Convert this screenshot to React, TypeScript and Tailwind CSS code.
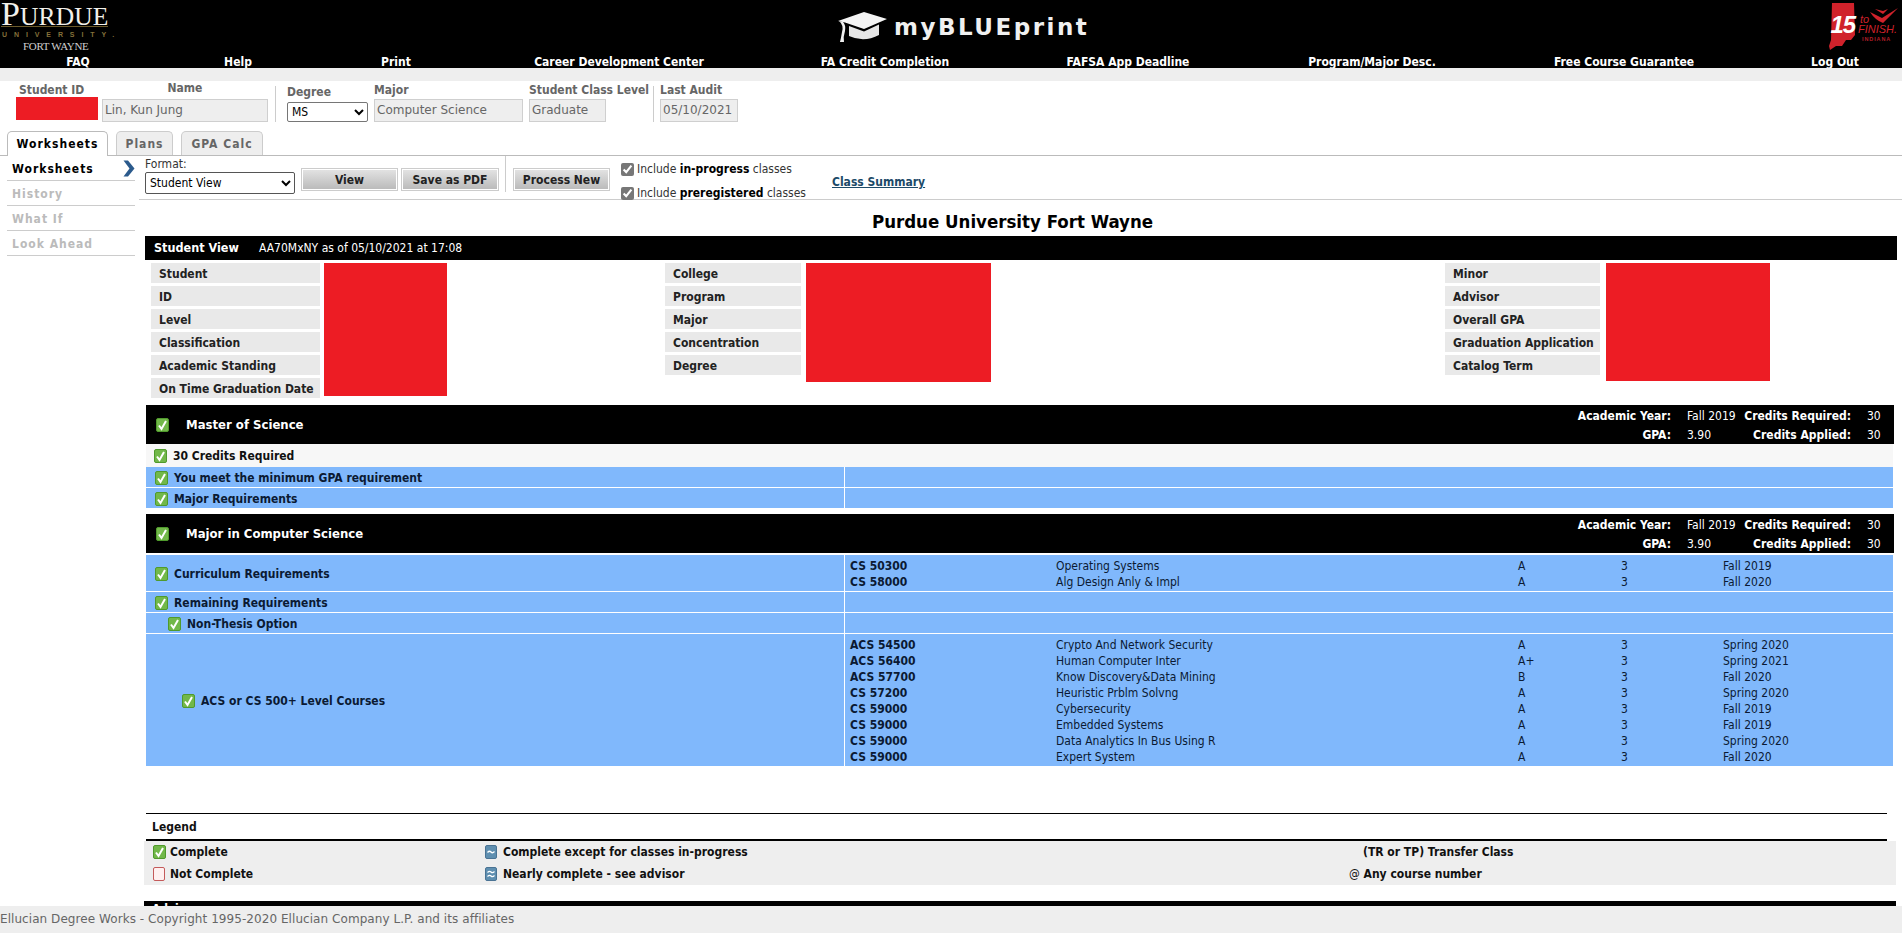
import React from "react";

const Check = ({ className = "" }: { className?: string }) => (
  <svg width="13" height="14" viewBox="0 0 13 14" className={"shrink-0 " + className}>
    <rect x="0.5" y="0.5" width="12" height="13" rx="1.5" fill="#72b84a" stroke="#4f9a2c" />
    <path d="M3 7.5 L5.5 11 L10 3" fill="none" stroke="#fff" strokeWidth="2" />
  </svg>
);

const Tilde = ({ double }: { double?: boolean }) => (
  <svg width="12" height="14" viewBox="0 0 12 14" className="shrink-0">
    <rect x="0.5" y="0.5" width="11" height="13" rx="1.5" fill="#5f8fb0" stroke="#4a7394" />
    {double ? (
      <path d="M2.5 5.5 Q4.5 3.5 6 5 T9.5 4.5 M2.5 9.5 Q4.5 7.5 6 9 T9.5 8.5" fill="none" stroke="#fff" strokeWidth="1.2" />
    ) : (
      <path d="M2.5 7.5 Q4.5 5.5 6 7 T9.5 6.5" fill="none" stroke="#fff" strokeWidth="1.4" />
    )}
  </svg>
);

const Empty = () => (
  <svg width="12" height="14" viewBox="0 0 12 14" className="shrink-0">
    <rect x="0.5" y="0.5" width="11" height="13" rx="1.5" fill="#fff0f0" stroke="#c45a5a" />
  </svg>
);

const nav = [
  "FAQ",
  "Help",
  "Print",
  "Career Development Center",
  "FA Credit Completion",
  "FAFSA App Deadline",
  "Program/Major Desc.",
  "Free Course Guarantee",
  "Log Out",
];

const PurdueLogo = () => (
  <div className="w-[116px] h-[53px] pl-[1px] font-['Liberation_Serif',serif] text-white leading-none">
    <div className="h-[26px] pt-[2px] text-[25.5px] tracking-[0.1px] text-[#f2f0ea] whitespace-nowrap">
      <span className="text-[34px] leading-[24px]">P</span>URDUE
    </div>
    <div className="h-px w-[107px] bg-[#6b5a2a]" />
    <div className="h-[13px] pt-[4px] pl-[1px] text-[7px] font-bold tracking-[6.9px] text-[#84703a] whitespace-nowrap font-['Liberation_Sans',sans-serif]">
      UNIVERSITY.
    </div>
    <div className="pt-[1px] pl-[22px] text-[11px] tracking-[-0.3px] text-[#cfcfcf] whitespace-nowrap">FORT WAYNE</div>
  </div>
);

const Cap = () => (
  <svg width="51" height="32" viewBox="0 0 51 32">
    <path d="M1 10 L27 1 L50 8 L27 18 L8 11.5 Z" fill="#f4f4f4" />
    <path d="M12 15 L27 20.5 L42 13.5 L42 24 Q27 32 12 25 Z" fill="#e6e6e6" />
    <path d="M2 10 Q7 14 5 21 Q4 27 3 31 L7 31 Q6 26 8 20 Q9 14 6 11" fill="#f0f0f0" />
  </svg>
);

const FinishLogo = () => (
  <svg width="82" height="53" viewBox="0 0 82 53">
    <path d="M12 3 L34 3 L35 35 L31 40 L26 40 L22 46 L16 46 L10 50 L9 46 L11 40 Z" fill="#d0222b" />
    <text x="10.5" y="33" fill="#fff" fontFamily="Liberation Sans, sans-serif" fontWeight="700" fontStyle="italic" fontSize="24" letterSpacing="-1">15</text>
    <text x="40" y="23" fill="#d0222b" fontFamily="Liberation Sans, sans-serif" fontStyle="italic" fontSize="11">to</text>
    <path d="M50 12 L62 18 L78 8 L63 23 Q55 20 50 12 Z" fill="#d0222b" />
    <path d="M55 9 L63 11 L68 9 L63 14 Z" fill="#d0222b" />
    <text x="38" y="33" fill="#d0222b" fontFamily="Liberation Sans, sans-serif" fontStyle="italic" fontSize="11">FINISH.</text>
    <text x="42" y="41" fill="#b01e27" fontFamily="Liberation Sans, sans-serif" fontWeight="700" fontSize="5.5" letterSpacing="0.9">INDIANA</text>
  </svg>
);

const Header = () => (
  <header className="bg-black h-[68px] flex flex-col">
    <div className="h-[53px] flex items-start">
      <div className="w-[140px]"><PurdueLogo /></div>
      <div className="flex-1 flex items-center gap-[6px] pt-[11px] pl-[697px]">
        <Cap />
        <span className="font-['DejaVu_Sans',sans-serif] [font-stretch:normal] font-bold text-[23px] leading-[32px] tracking-[2.5px] text-[#f0f0f0]">myBLUEprint</span>
      </div>
      <div className="w-[82px]"><FinishLogo /></div>
    </div>
    <nav className="h-[15px] grid grid-cols-[156px_164px_152px_294px_238px_248px_240px_264px_146px] text-white font-bold text-[12px] leading-[18px] text-center overflow-hidden">
      {nav.map((n) => (
        <a key={n} className={n === "Log Out" ? "pl-[12px]" : ""}>{n}</a>
      ))}
    </nav>
  </header>
);

const Ro = ({ value, w }: { value: string; w: string }) => (
  <input
    readOnly
    value={value}
    className={"h-[23px] bg-[#eeeeee] border border-[#cfcfcf] px-[2px] font-['DejaVu_Sans',sans-serif] [font-stretch:normal] text-[12px] text-[#666] outline-none " + w}
  />
);

const Lab = ({ children, center }: { children: React.ReactNode; center?: boolean }) => (
  <div className={"h-[13px] leading-[13px] font-bold text-[12px] text-[#666] whitespace-nowrap " + (center ? "text-center" : "")}>{children}</div>
);

const StudentBar = () => (
  <div className="h-[50px] flex items-start pt-[3px] pl-[16px]">
    <div className="w-[82px]">
      <div className="pl-[3px]"><Lab>Student ID</Lab></div>
      <div className="h-[23px] bg-[#ed1c24]" />
    </div>
    <div className="w-[166px] ml-[4px] -mt-[2px]">
      <Lab center>Name</Lab>
      <div className="mt-[2px]"><Ro value="Lin, Kun Jung" w="w-[166px]" /></div>
    </div>
    <div className="w-px h-[36px] bg-[#ccc] ml-[7px] mt-[2px]" />
    <div className="w-[81px] ml-[11px] pt-[2px]">
      <Lab>Degree</Lab>
      <select defaultValue="MS" className="mt-[2px] h-[20px] w-[81px] bg-white border border-[#767676] rounded-[2px] text-[12px] text-black">
        <option>MS</option>
      </select>
    </div>
    <div className="w-[149px] ml-[6px]">
      <Lab>Major</Lab>
      <Ro value="Computer Science" w="w-[149px]" />
    </div>
    <div className="w-[124px] ml-[6px]">
      <Lab>Student Class Level</Lab>
      <Ro value="Graduate" w="w-[77px]" />
    </div>
    <div className="w-px h-[36px] bg-[#ccc] mt-[2px]" />
    <div className="w-[78px] ml-[6px]">
      <Lab>Last Audit</Lab>
      <Ro value="05/10/2021" w="w-[78px]" />
    </div>
  </div>
);

const Tabs = () => (
  <div className="h-[25px] border-b border-[#bbb] flex items-end pl-[7px] gap-[8px] font-bold text-[12px] tracking-[1px]">
    <div className="h-[25px] -mb-px w-[101px] border border-b-0 border-[#bbb] rounded-t-[5px] bg-white text-black flex items-center justify-center">Worksheets</div>
    <div className="h-[24px] w-[57px] border border-b-0 border-[#ccc] rounded-t-[5px] bg-[#eee] text-[#666] flex items-center justify-center">Plans</div>
    <div className="h-[24px] w-[82px] border border-b-0 border-[#ccc] rounded-t-[5px] bg-[#eee] text-[#666] flex items-center justify-center">GPA Calc</div>
  </div>
);

const SideNav = () => (
  <aside className="w-[139px] pl-[7px] pr-[4px] font-bold text-[12px] tracking-[1px]">
    <div className="relative h-[25px] border-b border-[#ccc] flex items-center pl-[5px] pt-[2px] text-black">
      Worksheets
      <svg width="12" height="17" viewBox="0 0 12 17" className="absolute right-0 top-[4px]">
        <path d="M0.5 0.5 L5 0.5 L11.5 8.5 L5 16.5 L0.5 16.5 L6.5 8.5 Z" fill="#2b5a8c" />
      </svg>
    </div>
    {["History", "What If", "Look Ahead"].map((t) => (
      <div key={t} className="h-[25px] border-b border-[#ccc] flex items-center pl-[5px] pt-[2px] text-[#bbb]">{t}</div>
    ))}
  </aside>
);

const btn = "h-[23px] border border-[#ccc] shadow-[inset_0_0_0_1px_#fff] bg-linear-to-b from-[#e4e4e4] to-[#b9b9b9] font-bold text-[12px] text-[#222] flex items-center justify-center";

const Toolbar = () => (
  <div className="h-[44px] border-b border-[#ccc] pl-[6px] flex items-start">
    <div className="w-[150px] text-[12px] text-[#333]">
      <div className="h-[15px] leading-[15px] mt-[1px]">Format:</div>
      <select defaultValue="Student View" className="h-[22px] w-[150px] bg-white border border-[#555] rounded-[2px] text-[12px] text-black">
        <option>Student View</option>
      </select>
    </div>
    <button className={btn + " w-[97px] ml-[6px] mt-[12px]"}>View</button>
    <button className={btn + " w-[98px] ml-[3px] mt-[12px]"}>Save as PDF</button>
    <div className="w-px h-[36px] bg-[#ccc] ml-[6px]" />
    <button className={btn + " w-[97px] ml-[7px] mt-[12px]"}>Process New</button>
    <div className="ml-[11px] w-[211px] pt-[2px] text-[12px] text-[#333]">
      <label className="h-[24px] flex items-center gap-[3px] -mt-[1px]">
        <input type="checkbox" checked readOnly className="w-[13px] h-[13px] m-0 accent-[#777]" />
        <span>Include <b className="text-black">in-progress</b> classes</span>
      </label>
      <label className="h-[24px] flex items-center gap-[3px]">
        <input type="checkbox" checked readOnly className="w-[13px] h-[13px] m-0 accent-[#777]" />
        <span>Include <b className="text-black">preregistered</b> classes</span>
      </label>
    </div>
    <a className="mt-[17px] font-bold text-[12px] text-[#1c4a68] underline">Class Summary</a>
  </div>
);

const InfoCol = ({ labels, w, ml, redW, redH, gap }: { labels: string[]; w: string; ml: string; redW: string; redH: string; gap: string }) => (
  <div className={"flex items-start " + ml}>
    <div className={"flex flex-col gap-[3px] " + w}>
      {labels.map((l) => (
        <div key={l} className="h-[20px] leading-[22px] bg-[#e9e9e9] pl-[8px] font-bold text-[12px] text-[#222] whitespace-nowrap">{l}</div>
      ))}
    </div>
    <div className={"bg-[#ed1c24] " + redW + " " + redH + " " + gap} />
  </div>
);

const SectionHead = ({ title, gpa }: { title: string; gpa: string }) => (
  <div className="h-[39px] w-[1748px] ml-[1px] bg-black text-white flex items-center text-[12px]">
    <Check className="ml-[10px]" />
    <div className="ml-[17px] font-bold text-[13px]">{title}</div>
    <div className="ml-auto grid grid-cols-[100px_70px_110px_43px] grid-rows-[19px_19px] items-center pt-[2px] leading-[19px] whitespace-nowrap">
      <div className="font-bold text-right">Academic Year:</div>
      <div className="pl-[16px]">Fall 2019</div>
      <div className="font-bold text-right">Credits Required:</div>
      <div className="pl-[16px]">30</div>
      <div className="font-bold text-right">GPA:</div>
      <div className="pl-[16px]">{gpa}</div>
      <div className="font-bold text-right">Credits Applied:</div>
      <div className="pl-[16px]">30</div>
    </div>
  </div>
);

type Course = [string, string, string, string, string];

const Req = ({ label, indent, h, courses, pt }: { label: string; indent: string; h: string; courses?: Course[]; pt?: string }) => (
  <div className={"w-[1747px] ml-[1px] mb-px bg-[#80b8fc] grid grid-cols-[699px_1fr] " + h}>
    <div className={"flex items-center gap-[6px] pt-px font-bold text-[12px] text-[#0b1a33] border-r border-white " + indent}>
      <Check />
      <span>{label}</span>
    </div>
    <div className={"text-[12px] text-[#0b1a33] " + (pt ?? "")}>
      {courses?.map((c, i) => (
        <div key={i} className="h-[16px] leading-[16px] grid grid-cols-[206px_462px_103px_102px_1fr] pl-[5px]">
          <div className="font-bold">{c[0]}</div>
          <div>{c[1]}</div>
          <div>{c[2]}</div>
          <div>{c[3]}</div>
          <div>{c[4]}</div>
        </div>
      ))}
    </div>
  </div>
);

const Legend = () => (
  <div className="mt-[47px] text-[12px] font-bold text-[#111]">
    <div className="h-[28px] w-[1741px] ml-[1px] border-t border-b-2 border-black pl-[6px] pt-[1px] flex items-center">Legend</div>
    <div className="h-[44px] w-[1752px] -ml-px bg-[#eeeeee] grid grid-cols-[332px_878px_1fr] grid-rows-[22px_22px] items-center pl-[9px]">
      <div className="flex items-center gap-[4px]"><Check />Complete</div>
      <div className="flex items-center gap-[6px]"><Tilde />Complete except for classes in-progress</div>
      <div>(TR or TP) Transfer Class</div>
      <div className="flex items-center gap-[5px]"><Empty />Not Complete</div>
      <div className="flex items-center gap-[6px]"><Tilde double />Nearly complete - see advisor</div>
      <div className="-ml-[14px]"><span className="font-normal">@</span> Any course number</div>
    </div>
    <div className="mt-[16px] h-[24px] w-[1752px] -ml-px bg-black text-white pl-[8px] leading-[16px]">Advice</div>
  </div>
);

export default function App() {
  return (
    <div className="relative h-screen overflow-hidden bg-white font-['DejaVu_Sans_Condensed','DejaVu_Sans',sans-serif] [font-stretch:condensed]">
      <Header />
      <div className="h-[13px] bg-[#eeeeee]" />
      <StudentBar />
      <Tabs />
      <div className="flex items-start">
        <SideNav />
        <main className="flex-1 min-w-0">
          <Toolbar />
          <h1 className="h-[36px] pr-[16px] text-center font-bold text-[18.5px] leading-[43px] text-black">Purdue University Fort Wayne</h1>
          <div className="pl-[6px]">
            <div className="h-[24px] w-[1752px] bg-black text-white flex items-center text-[12px] pl-[9px]">
              <b className="font-bold text-[12.5px] w-[105px]">Student View</b>
              <span>AA70MxNY as of 05/10/2021 at 17:08</span>
            </div>
            <div className="h-[145px] pt-[3px] flex items-start">
              <InfoCol
                labels={["Student", "ID", "Level", "Classification", "Academic Standing", "On Time Graduation Date"]}
                w="w-[169px]" ml="ml-[6px]" redW="w-[123px]" redH="h-[133px]" gap="ml-[4px]"
              />
              <InfoCol
                labels={["College", "Program", "Major", "Concentration", "Degree"]}
                w="w-[136px]" ml="ml-[218px]" redW="w-[185px]" redH="h-[119px]" gap="ml-[5px]"
              />
              <InfoCol
                labels={["Minor", "Advisor", "Overall GPA", "Graduation Application", "Catalog Term"]}
                w="w-[155px]" ml="ml-[454px]" redW="w-[164px]" redH="h-[118px]" gap="ml-[6px]"
              />
            </div>
            <SectionHead title="Master of Science" gpa="3.90" />
            <div className="h-[23px] w-[1747px] ml-[1px] bg-[#f7f7f7] flex items-center gap-[6px] pl-[8px] font-bold text-[12px] text-[#111]">
              <Check />
              <span>30 Credits Required</span>
            </div>
            <Req label="You meet the minimum GPA requirement" indent="pl-[9px]" h="h-[20px]" />
            <Req label="Major Requirements" indent="pl-[9px]" h="h-[20px]" />
            <div className="h-[5px]" />
            <SectionHead title="Major in Computer Science" gpa="3.90" />
            <div className="h-[2px]" />
            <Req
              label="Curriculum Requirements" indent="pl-[9px]" h="h-[36px]" pt="pt-[3px]"
              courses={[
                ["CS 50300", "Operating Systems", "A", "3", "Fall 2019"],
                ["CS 58000", "Alg Design Anly & Impl", "A", "3", "Fall 2020"],
              ]}
            />
            <Req label="Remaining Requirements" indent="pl-[9px]" h="h-[20px]" />
            <Req label="Non-Thesis Option" indent="pl-[22px]" h="h-[20px]" />
            <Req
              label="ACS or CS 500+ Level Courses" indent="pl-[36px]" h="h-[132px]" pt="pt-[3px]"
              courses={[
                ["ACS 54500", "Crypto And Network Security", "A", "3", "Spring 2020"],
                ["ACS 56400", "Human Computer Inter", "A+", "3", "Spring 2021"],
                ["ACS 57700", "Know Discovery&Data Mining", "B", "3", "Fall 2020"],
                ["CS 57200", "Heuristic Prblm Solvng", "A", "3", "Spring 2020"],
                ["CS 59000", "Cybersecurity", "A", "3", "Fall 2019"],
                ["CS 59000", "Embedded Systems", "A", "3", "Fall 2019"],
                ["CS 59000", "Data Analytics In Bus Using R", "A", "3", "Spring 2020"],
                ["CS 59000", "Expert System", "A", "3", "Fall 2020"],
              ]}
            />
            <Legend />
          </div>
        </main>
      </div>
      <footer className="absolute bottom-0 left-0 right-0 h-[27px] bg-[#eeeeee] font-['DejaVu_Sans',sans-serif] [font-stretch:normal] text-[12px] tracking-[0.06px] text-[#666] leading-[27px] whitespace-nowrap">
        Ellucian Degree Works - Copyright 1995-2020 Ellucian Company L.P. and its affiliates
      </footer>
    </div>
  );
}
